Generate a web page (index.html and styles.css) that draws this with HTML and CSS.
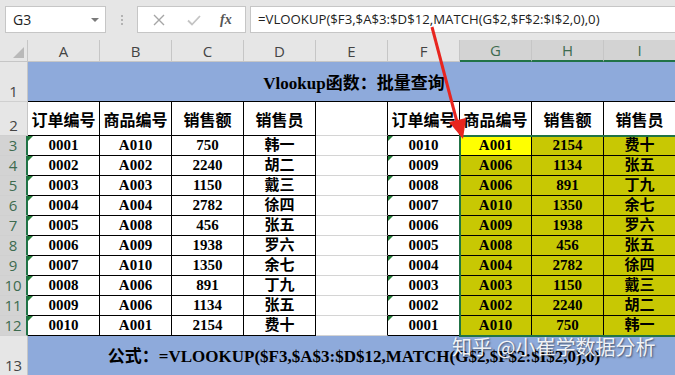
FILE: index.html
```html
<!DOCTYPE html>
<html lang="zh-CN">
<head>
    <meta charset="UTF-8">
    <title>Vlookup 批量查询</title>
    <link rel="stylesheet" href="styles.css">
</head>
<body>
    <div class="topbar">
        <div class="namebox"><span>G3</span><span class="caret"></span></div>
        <div class="grip"><span></span></div>
        <div class="fxbox">
            <svg class="ico" width="14" height="14" viewBox="0 0 14 14"><path d="M2 2 L12 12 M12 2 L2 12" stroke="#a6a6a6" stroke-width="1.4" fill="none"/></svg>
            <svg class="ico" width="16" height="14" viewBox="0 0 16 14"><path d="M2 7.5 L6 11.5 L14 3" stroke="#c4c4c4" stroke-width="1.8" fill="none"/></svg>
            <span class="fx">fx</span>
        </div>
        <div class="formula">=VLOOKUP($F3,$A$3:$D$12,MATCH(G$2,$F$2:$I$2,0),0)</div>
    </div>

    <div class="sheet" id="sheet">
        <div class="corner"></div>
        <div class="colhead">A</div>
        <div class="colhead">B</div>
        <div class="colhead">C</div>
        <div class="colhead">D</div>
        <div class="colhead">E</div>
        <div class="colhead">F</div>
        <div class="colhead sel">G</div>
        <div class="colhead sel">H</div>
        <div class="colhead sel">I</div>

        <div class="rowhead">1</div>
        <div class="title">Vlookup函数：批量查询</div>

        <div class="rowhead">2</div>
        <div class="cell tb hd">订单编号</div>
        <div class="cell tb hd">商品编号</div>
        <div class="cell tb hd">销售额</div>
        <div class="cell tb hd">销售员</div>
        <div class="cell edge"></div>
        <div class="cell tb hd">订单编号</div>
        <div class="cell tb hd">商品编号</div>
        <div class="cell tb hd">销售额</div>
        <div class="cell tb hd">销售员</div>

        <!-- rows 3-12 are added by the script -->

        <div class="rowhead" id="r13">13</div>
        <div class="title foot">公式：=VLOOKUP($F3,$A$3:$D$12,MATCH(G$2,$F$2:$I$2,0),0)</div>

        <div class="selection"></div>
    </div>

    <svg class="arrow" width="675" height="375" viewBox="0 0 675 375">
        <line x1="432" y1="27" x2="457" y2="122" stroke="#e8251f" stroke-width="3"/>
        <polygon points="463,139 449,122 466,118" fill="#e8251f"/>
    </svg>

    <div class="watermark">知乎 @小崔学数据分析</div>

    <script>
        const orders = [
            { id: '0001', code: 'A010', amount: 750, seller: '韩一' },
            { id: '0002', code: 'A002', amount: 2240, seller: '胡二' },
            { id: '0003', code: 'A003', amount: 1150, seller: '戴三' },
            { id: '0004', code: 'A004', amount: 2782, seller: '徐四' },
            { id: '0005', code: 'A008', amount: 456, seller: '张五' },
            { id: '0006', code: 'A009', amount: 1938, seller: '罗六' },
            { id: '0007', code: 'A010', amount: 1350, seller: '余七' },
            { id: '0008', code: 'A006', amount: 891, seller: '丁九' },
            { id: '0009', code: 'A006', amount: 1134, seller: '张五' },
            { id: '0010', code: 'A001', amount: 2154, seller: '费十' }
        ];

        function buildRows() {
            const lookup = orders.slice().reverse();
            let html = '';

            orders.forEach((item, i) => {
                const found = lookup[i];
                const first = i === 0 ? ' active' : ' hit';
                html += `
                    <div class="rowhead sel">${i + 3}</div>
                    <div class="cell tb txt">${item.id}</div>
                    <div class="cell tb">${item.code}</div>
                    <div class="cell tb">${item.amount}</div>
                    <div class="cell tb">${item.seller}</div>
                    <div class="cell edge"></div>
                    <div class="cell tb txt">${found.id}</div>
                    <div class="cell tb${first}">${found.code}</div>
                    <div class="cell tb hit">${found.amount}</div>
                    <div class="cell tb hit">${found.seller}</div>
                `;
            });

            document.getElementById('r13').insertAdjacentHTML('beforebegin', html);
        }

        buildRows();
    </script>
</body>
</html>
```

FILE: styles.css
```css
* {
    box-sizing: border-box;
    margin: 0;
    padding: 0;
}
body {
    width: 675px;
    height: 375px;
    overflow: hidden;
    position: relative;
    background-color: #fff;
    font-family: "Liberation Serif", "Noto Sans CJK SC", serif;
}
.topbar {
    height: 40px;
    background-color: #e6e6e6;
    display: flex;
    align-items: flex-start;
    padding: 6px 0 0 5px;
    font-family: "Open Sans", sans-serif;
}
.namebox {
    width: 101px;
    height: 27px;
    background-color: #fff;
    border: 1px solid #c6c6c6;
    display: flex;
    align-items: center;
    justify-content: space-between;
    padding: 0 6px 0 7px;
    font-size: 14px;
    color: #222;
}
.caret {
    border-left: 4px solid transparent;
    border-right: 4px solid transparent;
    border-top: 4px solid #7a7a7a;
}
.grip {
    width: 31px;
    height: 27px;
    display: flex;
    justify-content: center;
    padding-top: 9px;
}
.grip span {
    width: 2px;
    height: 2px;
    background-color: #b3b3b3;
    box-shadow: 0 4px #b3b3b3, 0 8px #b3b3b3;
}
.fxbox {
    width: 109px;
    height: 27px;
    background-color: #fff;
    border: 1px solid #c6c6c6;
    display: flex;
    align-items: center;
    padding-left: 14px;
    gap: 20px;
}
.fx {
    font-family: "Liberation Serif", serif;
    font-style: italic;
    font-weight: bold;
    font-size: 14px;
    color: #555;
    margin-left: -2px;
}
.formula {
    flex: 1;
    height: 27px;
    margin-left: 4px;
    background-color: #fff;
    border: 1px solid #c6c6c6;
    border-right: none;
    padding-left: 7px;
    font-size: 13.2px;
    line-height: 25px;
    color: #222;
    white-space: nowrap;
}
.sheet {
    position: relative;
    display: grid;
    grid-template-columns: 28px repeat(9, 72px);
    grid-template-rows: 22px 40px 34px repeat(10, 20px) 40px;
}
.corner, .colhead {
    background-color: #e6e6e6;
    border-right: 1px solid #c6c6c6;
    border-bottom: 1px solid #c6c6c6;
}
.corner {
    position: relative;
}
.corner::after {
    content: "";
    position: absolute;
    right: 3px;
    bottom: 3px;
    border-left: 11px solid transparent;
    border-bottom: 11px solid #b9b9b9;
}
.colhead {
    display: flex;
    align-items: center;
    justify-content: center;
    font-family: "Open Sans", sans-serif;
    font-size: 15px;
    color: #444;
}
.colhead.sel {
    background-color: #d3d3d3;
    color: #3d6b4f;
    border-bottom: 2px solid #217346;
}
.rowhead {
    background-color: #e6e6e6;
    border-right: 1px solid #c6c6c6;
    border-bottom: 1px solid #d0d0d0;
    display: flex;
    align-items: flex-end;
    justify-content: center;
    font-family: "Open Sans", sans-serif;
    font-size: 15px;
    line-height: 19px;
    color: #444;
}
.rowhead.sel {
    background-color: #d3d3d3;
    color: #3d6b4f;
    border-right: 2px solid #217346;
}
.title {
    grid-column: 2 / 11;
    background-color: #8eaadb;
    border-bottom: 1px solid #000;
    display: flex;
    align-items: center;
    justify-content: center;
    font-weight: bold;
    font-size: 17px;
    padding-left: 4px;
}
.title.foot {
    border-bottom: none;
    font-size: 17px;
    padding-bottom: 4px;
}
.cell {
    position: relative;
    border-right: 1px solid #d4d4d4;
    border-bottom: 1px solid #d4d4d4;
    display: flex;
    align-items: center;
    justify-content: center;
    font-weight: bold;
    font-size: 15px;
    line-height: 1;
}
.cell.tb {
    border-color: #000;
}
.cell.edge {
    border-right-color: #000;
}
.cell.hd {
    font-family: "Noto Sans CJK SC", sans-serif;
    font-size: 16px;
}
.hit {
    background-color: #c8c803;
}
.active {
    background-color: #ffff00;
}
.txt::before {
    content: "";
    position: absolute;
    left: 0;
    top: 0;
    border-top: 5px solid #1e7b34;
    border-right: 5px solid transparent;
}
.selection {
    position: absolute;
    left: 459px;
    top: 95px;
    width: 219px;
    height: 202px;
    border: 2px solid #217346;
    z-index: 2;
    pointer-events: none;
}
.arrow {
    position: absolute;
    left: 0;
    top: 0;
    z-index: 5;
    pointer-events: none;
}
.watermark {
    position: absolute;
    left: 452px;
    top: 332px;
    z-index: 6;
    font-family: "Noto Sans CJK SC", sans-serif;
    font-size: 20px;
    color: rgba(255, 255, 255, 0.92);
    text-shadow: 1px 1px 2px rgba(0, 0, 0, 0.55);
    white-space: nowrap;
}
```
